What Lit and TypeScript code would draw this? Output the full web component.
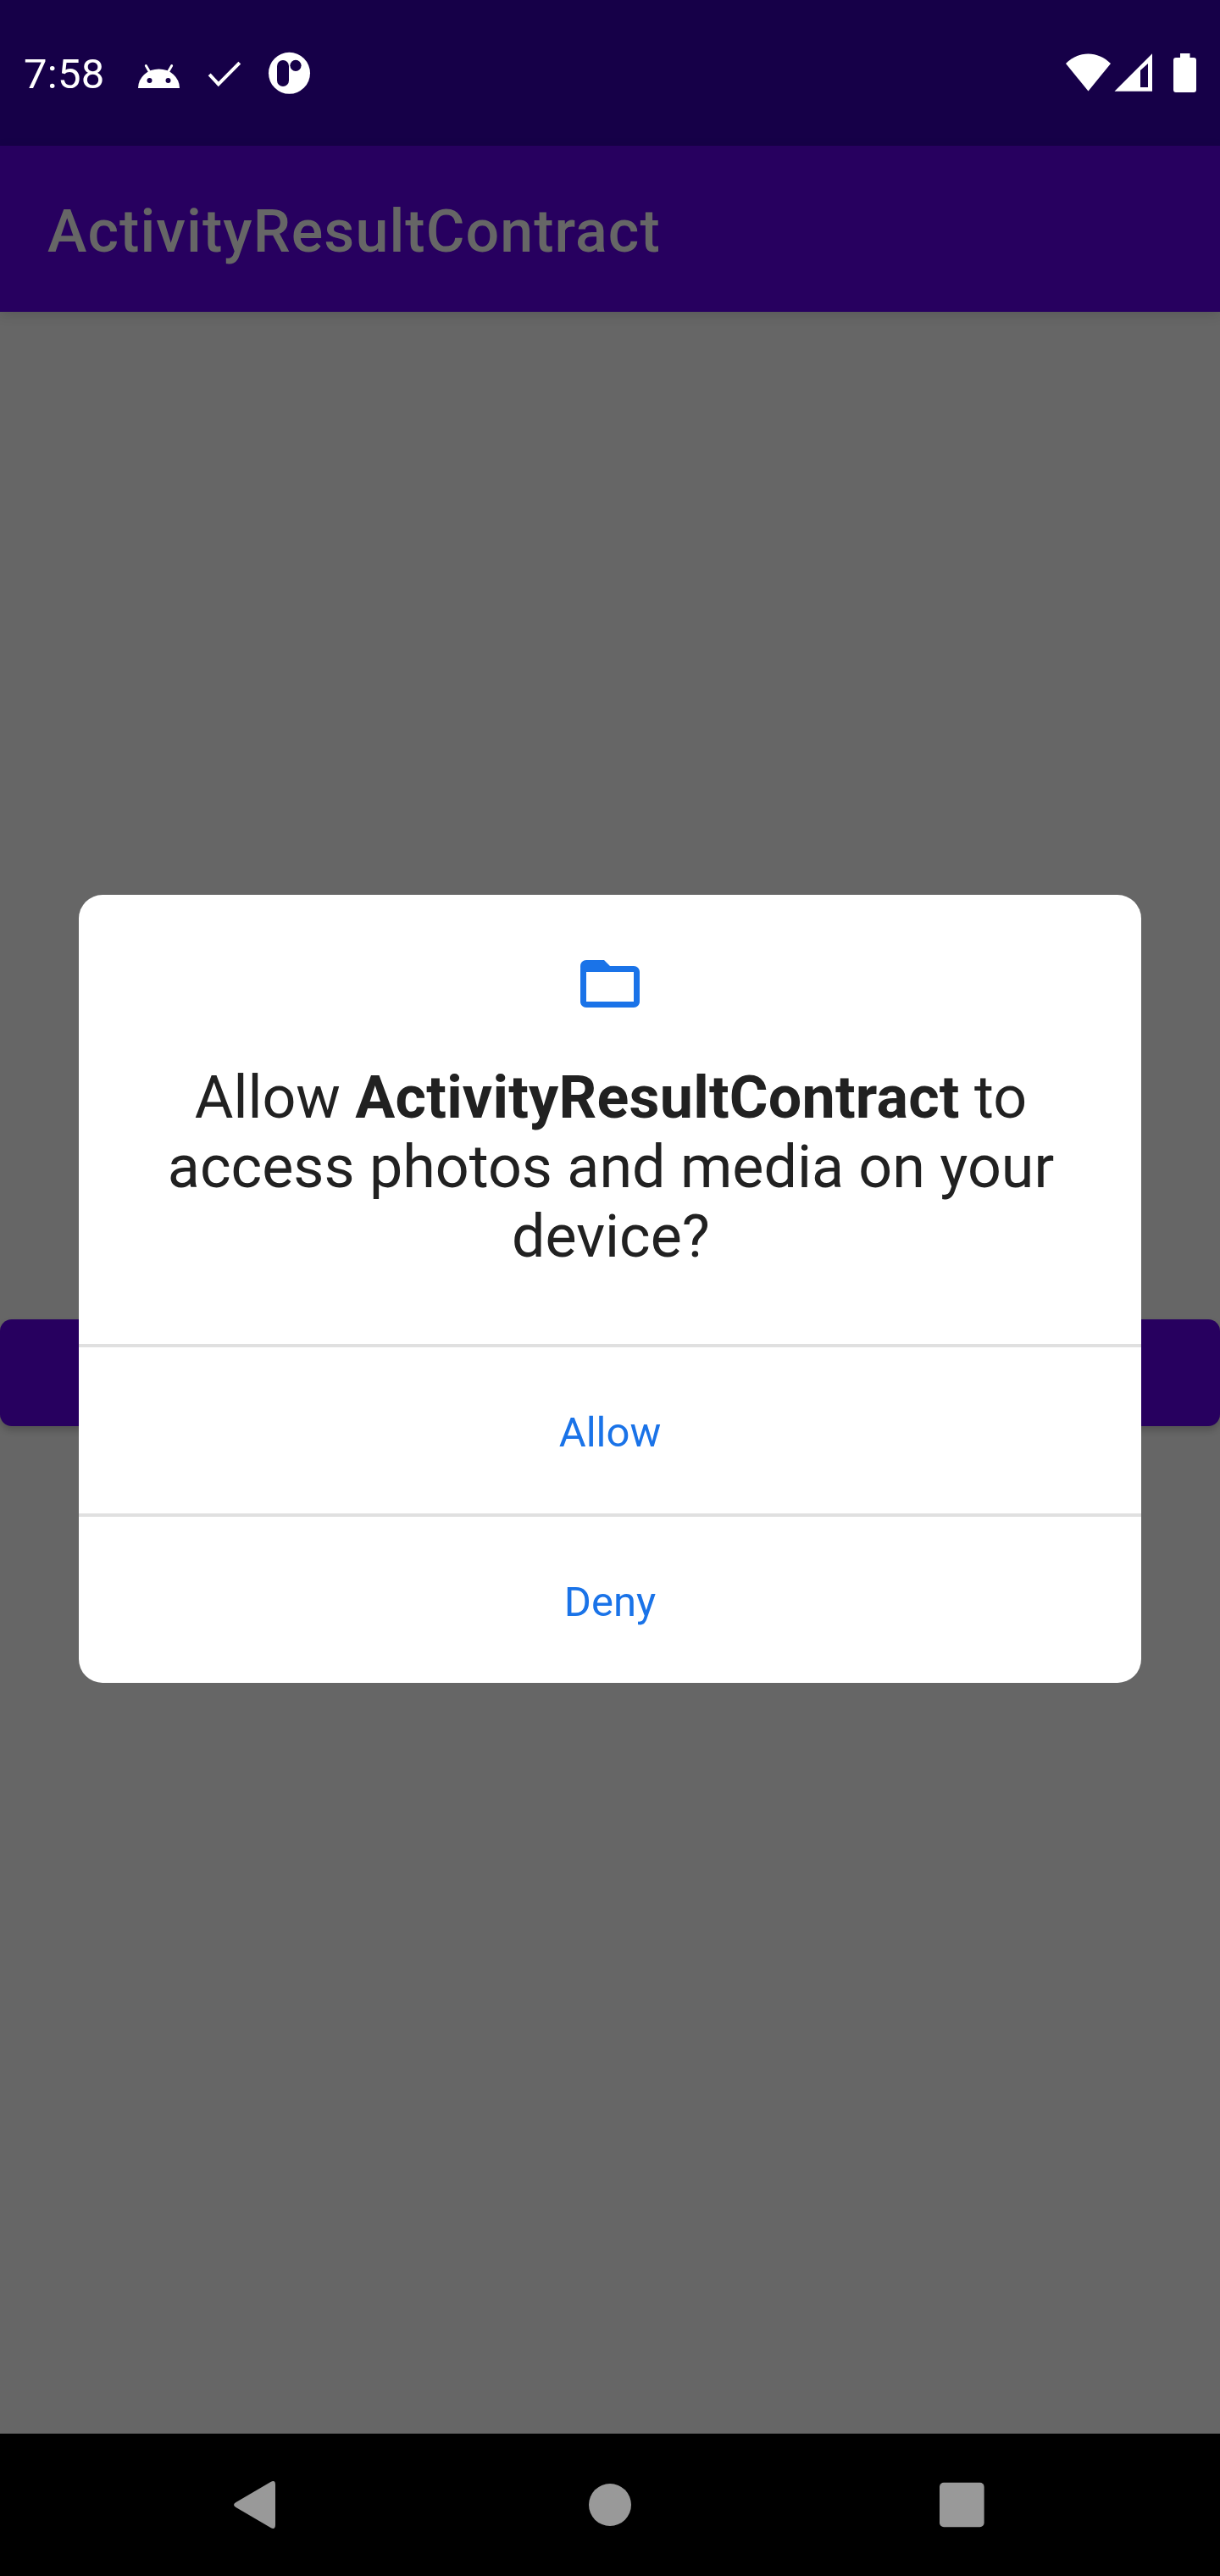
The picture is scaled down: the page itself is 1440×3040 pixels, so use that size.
import { LitElement, html, css } from "lit";
import { customElement } from "lit/decorators.js";

@customElement("status-bar")
class StatusBar extends LitElement {
  static styles = css`
    :host { display: flex; box-sizing: border-box; height: 172px; padding: 0 28px; align-items: center; background: #160048; color: #fff; }
    svg { display: block; fill: #fff; }
    .time { font-size: 49px; line-height: 58px; width: 135px; margin-top: 3px; letter-spacing: 0.3px; white-space: nowrap; }
    .notes { display: flex; flex: 1; }
    .system { display: flex; }
  `;
  render() {
    return html`
      <span class="time">7:58</span>
      <div class="notes">
        <svg width="220" height="60" viewBox="163 56 220 60">
          <path d="M163 104a24.5 22.6 0 0 1 49 0z" />
          <path d="M172.3 77.5l5.2 9M202.7 77.5l-5.2 9" stroke="#fff" stroke-width="2.9" stroke-linecap="round" />
          <circle cx="176.5" cy="95" r="3" fill="#160048" /><circle cx="198.5" cy="95" r="3" fill="#160048" />
          <path d="M247.2 87.9l10.6 11.4 25-25.1" fill="none" stroke="#fff" stroke-width="4" />
          <circle cx="341.5" cy="86.3" r="24.5" />
          <rect x="327" y="71" width="14" height="31" rx="7" fill="#160048" />
          <circle cx="349" cy="77.3" r="6.6" fill="#160048" />
        </svg>
      </div>
      <div class="system">
        <svg width="155" height="60" viewBox="1257 56 155 60">
          <path d="M1258 75C1273 59.5 1296 59.5 1311 75L1284.500 107.500z" />
          <path fill-rule="evenodd" d="M1315.500 107.800L1360 63.300V107.800zM1346 83V103H1355V75z" />
          <path d="M1393 63H1404.500V68H1409a3 3 0 0 1 3 3V106a3 3 0 0 1-3 3H1388a3 3 0 0 1-3-3V71a3 3 0 0 1 3-3H1393z" />
        </svg>
      </div>`;
  }
}

@customElement("permission-dialog")
class PermissionDialog extends LitElement {
  static styles = css`
    :host { display: flex; flex-direction: column; width: 1254px; height: 930px; border-radius: 28px; overflow: hidden; background: #fff; color: #212121; }
    .message { display: flex; flex-direction: column; align-items: center; box-sizing: border-box; height: 530px; padding: 63px 84px 0; }
    .icon { display: block; width: 84px; height: 84px; fill: #1a73e8; }
    .title { margin: 51px 0 0; padding-left: 2px; font-size: 70px; line-height: 82px; font-weight: 400; text-align: center; }
    .title b { font-weight: 700; letter-spacing: 0.2px; }
    .action { all: unset; box-sizing: border-box; height: 200px; border-top: 4px solid #e0e0e0; font-size: 49px; line-height: 196px; padding-top: 3px; text-align: center; color: #1a73e8; }
  `;
  render() {
    return html`
      <div class="message">
        <svg class="icon" viewBox="0 0 24 24"><path d="M20 6h-8l-2-2H4c-1.100 0-1.990.9-1.990 2L2 18c0 1.100.9 2 2 2h16c1.100 0 2-.9 2-2V8c0-1.100-.9-2-2-2zm0 12H4V8h16v10z" /></svg>
        <h2 class="title">Allow <b>ActivityResultContract</b> to<br />access photos and media on your<br />device?</h2>
      </div>
      <button class="action">Allow</button>
      <button class="action">Deny</button>`;
  }
}

@customElement("nav-bar")
class NavBar extends LitElement {
  static styles = css`
    :host { display: flex; height: 168px; align-items: center; justify-content: space-between; box-sizing: border-box; padding: 0 263px; background: #000; }
    svg { display: block; width: 84px; height: 84px; fill: #999; }
  `;
  render() {
    return html`
      <svg viewBox="0 0 84 84"><path d="M56.500 15Q62 12 62 18.500V65.500Q62 72 56.500 69L15.500 45Q10.500 42 15.500 39z" /></svg>
      <svg viewBox="0 0 84 84"><circle cx="42" cy="42" r="25" /></svg>
      <svg viewBox="0 0 84 84"><rect x="16" y="15.700" width="52.600" height="52.600" rx="5" /></svg>`;
  }
}

@customElement("app-root")
class AppRoot extends LitElement {
  static styles = css`
    :host { display: flex; flex-direction: column; position: relative; width: 1440px; height: 3040px; overflow: hidden; background: #666; font-family: Roboto, sans-serif; }
    .appbar { display: flex; align-items: center; box-sizing: border-box; height: 196px; padding: 6px 56px 0; background: #27005f; color: #666; font-size: 70px; font-weight: 500; line-height: 82px; letter-spacing: 1.05px; box-shadow: 0 4px 14px rgba(0, 0, 0, 0.12); }
    .content { display: flex; flex: 1; flex-direction: column; justify-content: center; }
    .launch { height: 126px; border-radius: 14px; background: #27005f; box-shadow: 0 5px 9px rgba(0, 0, 0, 0.2); }
    .overlay { position: absolute; top: 1056px; left: 93px; }
  `;
  render() {
    return html`
      <status-bar></status-bar>
      <header class="appbar">ActivityResultContract</header>
      <main class="content"><div class="launch"></div></main>
      <nav-bar></nav-bar>
      <permission-dialog class="overlay"></permission-dialog>`;
  }
}
